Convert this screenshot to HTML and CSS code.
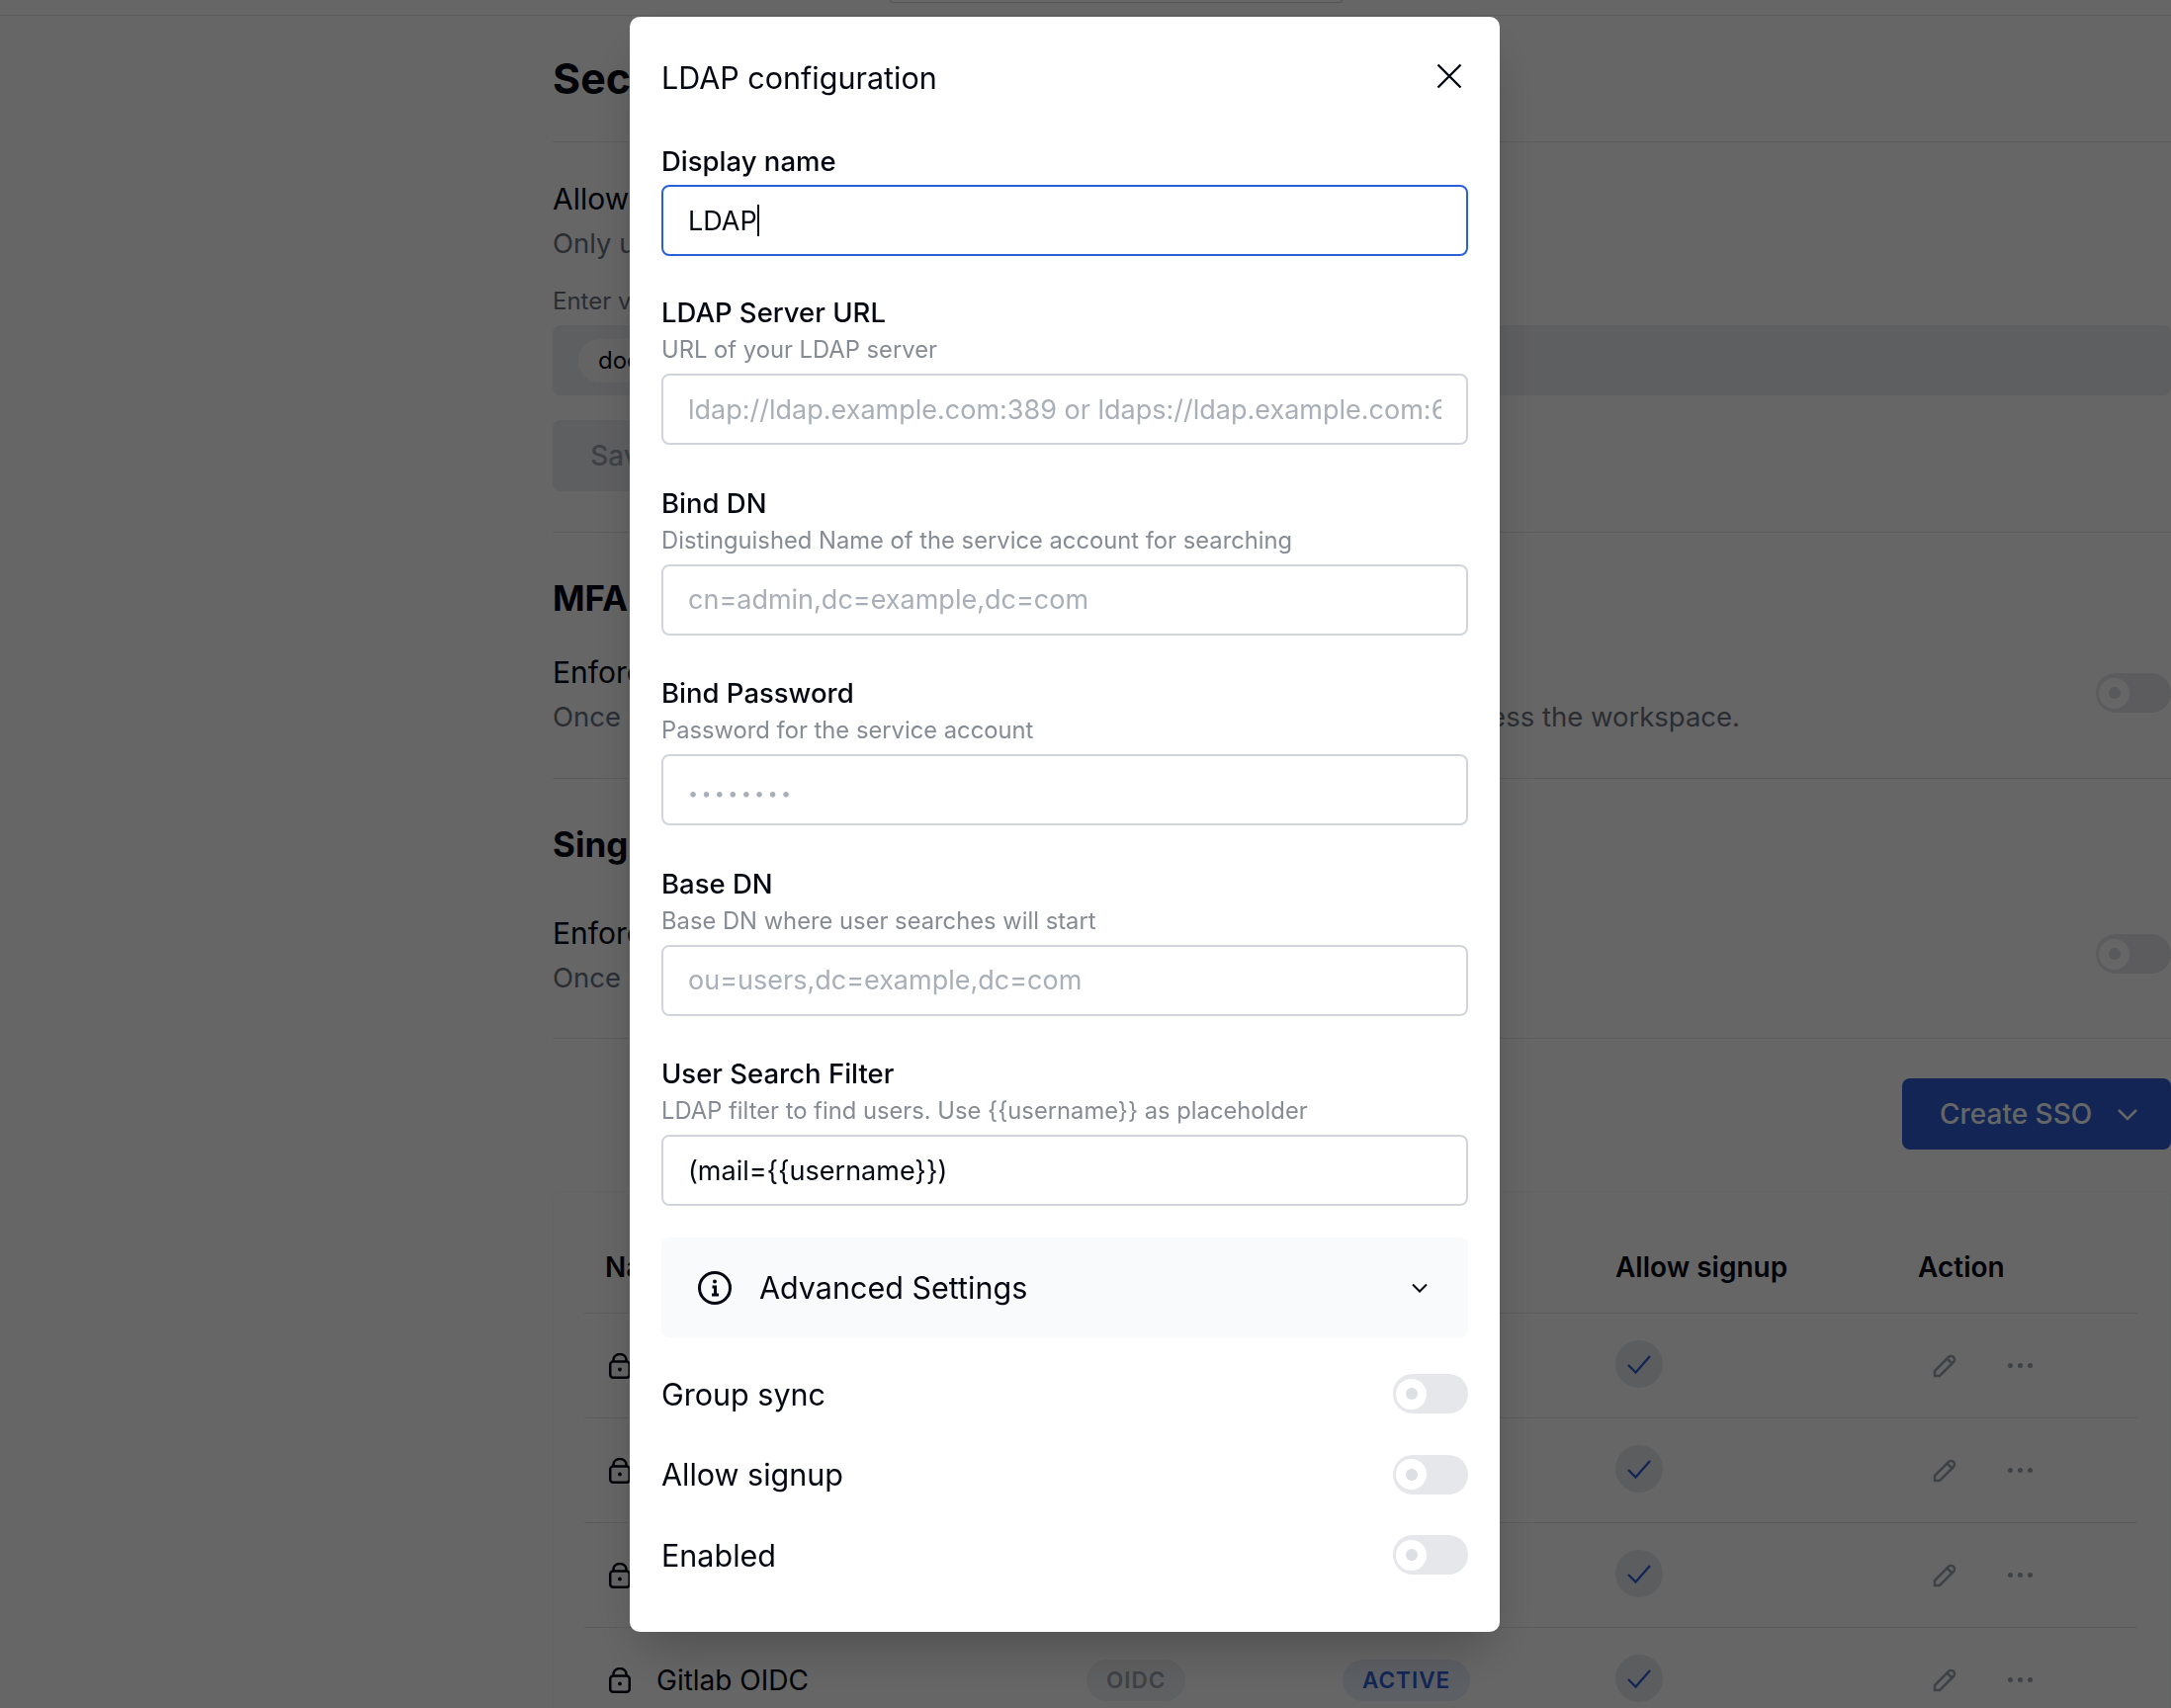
FILE: index.html
```html
<!DOCTYPE html>
<html lang="en">
<head>
    <meta charset="UTF-8">
    <title>LDAP configuration</title>
    <link rel="stylesheet" href="styles.css">
</head>
<body>
    <div class="topbar"><div class="searchbox"></div></div>

    <main class="page">
        <section class="head-section">
            <h1>Security</h1>
        </section>

        <section class="domains">
            <div class="row-title">Allowed email domains</div>
            <div class="row-desc">Only users with these email domains can join the workspace.</div>
            <div class="domain-label">Enter valid email domains</div>
            <div class="domain-box"><span class="domain-pill">docs.example.com</span></div>
            <button class="save-btn">Save</button>
        </section>

        <section class="setting mfa">
            <h2>MFA</h2>
            <div class="setting-row">
                <div>
                    <div class="row-title">Enforce MFA for all users</div>
                    <div class="row-desc">Once enabled, all users will be required to setup MFA before you can access the workspace.</div>
                </div>
                <span class="toggle"><span class="knob"></span></span>
            </div>
        </section>

        <section class="setting sso">
            <h2>Single sign-on</h2>
            <div class="setting-row">
                <div>
                    <div class="row-title">Enforce SSO for all users</div>
                    <div class="row-desc">Once enabled, all users will only be able to sign in with the SSO login.</div>
                </div>
                <span class="toggle"><span class="knob"></span></span>
            </div>
        </section>

        <div class="sso-actions">
            <button class="create-btn">Create SSO
                <svg width="24" height="24" viewBox="0 0 24 24"><path d="M3 8l9 9 9-9"/></svg>
            </button>
        </div>

        <section class="sso-card">
            <div class="sso-row sso-header">
                <div class="name-head">Name</div>
                <div>Type</div>
                <div>Status</div>
                <div>Allow signup</div>
                <div>Action</div>
            </div>
            <div class="sso-row">
                <div class="name-cell"><svg class="lock" viewBox="0 0 22 26"><path d="M4.500 9V6.500a6.500 5.500 0 0 1 13 0V9"/><rect x="1.250" y="8.500" width="19.500" height="16.250" rx="3"/><circle class="dot" cx="11" cy="16.500" r="1.900"/></svg></div>
                <div></div>
                <div></div>
                <div><span class="check"><svg width="26" height="26" viewBox="0 0 26 26"><path d="M2 14l7.500 7.500L24 5"/></svg></span></div>
                <div class="actions"><svg class="pencil" viewBox="0 0 24 24"><path d="M2 22v-5L16 3a3.500 3.500 0 0 1 5 5L7 22zM14.500 4.500l5 5"/></svg><span class="more"><i></i><i></i><i></i></span></div>
            </div>
            <div class="sso-row">
                <div class="name-cell"><svg class="lock" viewBox="0 0 22 26"><path d="M4.500 9V6.500a6.500 5.500 0 0 1 13 0V9"/><rect x="1.250" y="8.500" width="19.500" height="16.250" rx="3"/><circle class="dot" cx="11" cy="16.500" r="1.900"/></svg></div>
                <div></div>
                <div></div>
                <div><span class="check"><svg width="26" height="26" viewBox="0 0 26 26"><path d="M2 14l7.500 7.500L24 5"/></svg></span></div>
                <div class="actions"><svg class="pencil" viewBox="0 0 24 24"><path d="M2 22v-5L16 3a3.500 3.500 0 0 1 5 5L7 22zM14.500 4.500l5 5"/></svg><span class="more"><i></i><i></i><i></i></span></div>
            </div>
            <div class="sso-row">
                <div class="name-cell"><svg class="lock" viewBox="0 0 22 26"><path d="M4.500 9V6.500a6.500 5.500 0 0 1 13 0V9"/><rect x="1.250" y="8.500" width="19.500" height="16.250" rx="3"/><circle class="dot" cx="11" cy="16.500" r="1.900"/></svg></div>
                <div></div>
                <div></div>
                <div><span class="check"><svg width="26" height="26" viewBox="0 0 26 26"><path d="M2 14l7.500 7.500L24 5"/></svg></span></div>
                <div class="actions"><svg class="pencil" viewBox="0 0 24 24"><path d="M2 22v-5L16 3a3.500 3.500 0 0 1 5 5L7 22zM14.500 4.500l5 5"/></svg><span class="more"><i></i><i></i><i></i></span></div>
            </div>
            <div class="sso-row">
                <div class="name-cell"><svg class="lock" viewBox="0 0 22 26"><path d="M4.500 9V6.500a6.500 5.500 0 0 1 13 0V9"/><rect x="1.250" y="8.500" width="19.500" height="16.250" rx="3"/><circle class="dot" cx="11" cy="16.500" r="1.900"/></svg>Gitlab OIDC</div>
                <div><span class="badge">OIDC</span></div>
                <div><span class="badge badge-active">ACTIVE</span></div>
                <div><span class="check"><svg width="26" height="26" viewBox="0 0 26 26"><path d="M2 14l7.500 7.500L24 5"/></svg></span></div>
                <div class="actions"><svg class="pencil" viewBox="0 0 24 24"><path d="M2 22v-5L16 3a3.500 3.500 0 0 1 5 5L7 22zM14.500 4.500l5 5"/></svg><span class="more"><i></i><i></i><i></i></span></div>
            </div>
        </section>
    </main>

    <div class="overlay">
        <div class="modal">
            <div class="modal-head">
                <span class="modal-title">LDAP configuration</span>
                <svg class="close" viewBox="0 0 26 26"><path d="M1.500 1.500l23 23M24.500 1.500l-23 23"/></svg>
            </div>

            <div class="field field-first">
                <label class="label label-tight">Display name</label>
                <div class="input input-focus"><span>LDAP</span><span class="caret"></span></div>
            </div>
            <div class="field">
                <label class="label">LDAP Server URL</label>
                <div class="desc">URL of your LDAP server</div>
                <input class="input" type="text" placeholder="ldap://ldap.example.com:389 or ldaps://ldap.example.com:636">
            </div>
            <div class="field">
                <label class="label">Bind DN</label>
                <div class="desc">Distinguished Name of the service account for searching</div>
                <input class="input" type="text" placeholder="cn=admin,dc=example,dc=com">
            </div>
            <div class="field">
                <label class="label">Bind Password</label>
                <div class="desc">Password for the service account</div>
                <input class="input input-secret" type="password" placeholder="••••••••">
            </div>
            <div class="field">
                <label class="label">Base DN</label>
                <div class="desc">Base DN where user searches will start</div>
                <input class="input" type="text" placeholder="ou=users,dc=example,dc=com">
            </div>
            <div class="field">
                <label class="label">User Search Filter</label>
                <div class="desc">LDAP filter to find users. Use {{username}} as placeholder</div>
                <input class="input" type="text" value="(mail={{username}})">
            </div>

            <div class="advanced">
                <svg class="info" viewBox="0 0 36 36"><circle cx="18" cy="18" r="15.500"/><path d="M15.500 17H18.500V25M15 25H22"/><circle class="dot" cx="18" cy="11.500" r="2"/></svg>
                <span class="advanced-text">Advanced Settings</span>
                <svg class="chevron" viewBox="0 0 18 12"><path d="M2 2.500l7 7 7-7"/></svg>
            </div>

            <div class="switches">
                <div class="switch-row"><span>Group sync</span><span class="toggle"><span class="knob"></span></span></div>
                <div class="switch-row"><span>Allow signup</span><span class="toggle"><span class="knob"></span></span></div>
                <div class="switch-row"><span>Enabled</span><span class="toggle"><span class="knob"></span></span></div>
            </div>
        </div>
    </div>
</body>
</html>
```

FILE: styles.css
```css
* {
    box-sizing: border-box;
}
html, body {
    height: 1728px;
    overflow: hidden;
}
body {
    margin: 0;
    background-color: #fff;
    color: #030712;
    font-family: Inter, "Liberation Sans", sans-serif;
}
svg {
    fill: none;
    stroke: currentColor;
    flex-shrink: 0;
}
svg .dot {
    fill: currentColor;
    stroke: none;
}

/* page behind the dialog */
.topbar {
    height: 16px;
    padding-left: 900px;
    border-bottom: 1px solid #e5e7eb;
}
.searchbox {
    width: 458px;
    height: 3px;
    border: 1px solid #d1d5db;
    border-top: 0;
    border-radius: 0 0 8px 8px;
}
.page {
    padding-left: 559px;
    white-space: nowrap;
}
h1 {
    margin: 0;
    font-size: 43px;
    line-height: 46px;
    font-weight: 700;
}
h2 {
    margin: 0;
    font-size: 35px;
    line-height: 44px;
    font-weight: 700;
}
.head-section {
    padding: 40px 0 41px;
    border-bottom: 1px solid #e5e7eb;
}
.row-title {
    font-size: 30px;
    line-height: 36px;
}
.row-desc {
    font-size: 27.500px;
    line-height: 36px;
    color: #6b7280;
    margin-top: 9px;
}
.domains {
    padding: 39px 0 41px;
    border-bottom: 1px solid #e5e7eb;
}
.domain-label {
    margin-top: 26px;
    font-size: 24px;
    line-height: 30px;
    color: #6b7280;
}
.domain-box {
    display: flex;
    align-items: center;
    height: 71px;
    margin-top: 9px;
    padding-left: 26px;
    border-radius: 8px;
    background-color: #eceef1;
}
.domain-pill {
    height: 44px;
    padding: 0 20px;
    border-radius: 22px;
    background-color: #fafafa;
    font-size: 24px;
    line-height: 44px;
}
.save-btn {
    display: block;
    width: 142px;
    height: 72px;
    margin-top: 25px;
    border: 0;
    border-radius: 8px;
    background-color: #eceef1;
    color: #9ca3af;
    font: 500 28px Inter, sans-serif;
}
.setting {
    padding-top: 44px;
    border-bottom: 1px solid #e5e7eb;
}
.mfa {
    padding-bottom: 44px;
}
.sso {
    padding-bottom: 43px;
}
.setting-row {
    display: flex;
    justify-content: space-between;
    align-items: flex-start;
}
.mfa .setting-row {
    margin-top: 35px;
}
.sso .setting-row {
    margin-top: 50px;
}
.setting .toggle {
    margin-top: 19px;
}
.sso-actions {
    display: flex;
    justify-content: flex-end;
    padding-top: 40px;
}
.create-btn {
    display: flex;
    align-items: center;
    justify-content: space-between;
    width: 272px;
    height: 72px;
    padding: 0 32px 0 38px;
    border: 0;
    border-radius: 8px;
    background-color: #305dd2;
    color: #fff;
    font: 500 28px Inter, sans-serif;
}
.create-btn path {
    stroke-width: 2.500;
}
.sso-card {
    margin-top: 42px;
    padding: 0 33px 0 31px;
    border: 1px solid #f6f7f8;
    border-radius: 8px;
}
.sso-row {
    display: grid;
    grid-template-columns: 508px 259px 276px 306px 224px;
    align-items: center;
    height: 106px;
    border-top: 1px solid #e5e7eb;
    font-size: 28px;
}
.sso-header {
    height: 122px;
    padding-top: 30px;
    border-top: 0;
    font-weight: 600;
}
.name-head {
    padding-left: 21px;
}
.name-cell {
    display: flex;
    align-items: center;
    gap: 26px;
    padding-left: 25px;
}
.lock {
    width: 22px;
    height: 26px;
    stroke-width: 2.500;
}
.badge {
    display: inline-block;
    height: 42px;
    padding: 0 20px;
    border-radius: 21px;
    background-color: #eef0f2;
    color: #9ca3af;
    font-size: 22.500px;
    font-weight: 600;
    line-height: 42px;
    letter-spacing: 1px;
}
.badge-active {
    background-color: #e6edf9;
    color: #305dd2;
}
.check {
    display: flex;
    align-items: center;
    justify-content: center;
    width: 48px;
    height: 48px;
    margin-bottom: 4px;
    border-radius: 50%;
    background-color: #e3e8ee;
    color: #305dd2;
}
.check path {
    stroke-width: 2.400;
}
.actions {
    display: flex;
    align-items: center;
    gap: 52px;
    padding-left: 15px;
    color: #9ca3af;
}
.pencil {
    width: 24px;
    height: 24px;
    stroke-width: 2.500;
}
.more {
    display: flex;
    gap: 5px;
}
.more i {
    width: 5px;
    height: 5px;
    border-radius: 50%;
    background-color: #9ca3af;
}

/* dialog */
.overlay {
    position: fixed;
    top: 0;
    left: 0;
    right: 0;
    bottom: 0;
    padding: 17px 0 0 637px;
    background-color: rgba(0, 0, 0, .6);
}
.modal {
    width: 880px;
    height: 1634px;
    padding: 41px 32px 0;
    border-radius: 10px;
    background-color: #fff;
    box-shadow: 0 25px 50px -12px rgba(0, 0, 0, .25);
}
.modal-head {
    display: flex;
    justify-content: space-between;
    align-items: center;
    height: 40px;
    margin-bottom: 46px;
}
.modal-title {
    font-size: 30.500px;
}
.close {
    width: 26px;
    height: 26px;
    margin: -3px 6px 0 0;
    stroke-width: 2.400;
}
.field {
    margin-bottom: 40.500px;
}
.field-first {
    margin-bottom: 39px;
}
.label {
    display: block;
    font-size: 27.500px;
    line-height: 37px;
    font-weight: 500;
}
.label-tight {
    line-height: 38px;
    margin-bottom: 5px;
}
.desc {
    margin: 1px 0 6px;
    font-size: 23.750px;
    line-height: 36px;
    color: #858b94;
}
.input {
    display: block;
    width: 100%;
    height: 72px;
    padding: 0 25px;
    border: 2px solid #d1d5db;
    border-radius: 8px;
    outline: 0;
    background-color: #fff;
    color: #030712;
    font: 400 27px Inter, sans-serif;
}
.input::placeholder {
    color: #a9afb8;
}
.input-secret::placeholder {
    font-size: 18px;
    letter-spacing: 3.300px;
}
.input-focus {
    display: flex;
    align-items: center;
    border-color: #2b5fd9;
}
.caret {
    width: 2px;
    height: 32px;
    background-color: #030712;
}
.advanced {
    display: flex;
    align-items: center;
    height: 101px;
    margin-top: -8.500px;
    padding: 0 40px 0 36px;
    border-radius: 8px;
    background-color: #f9fafb;
}
.info {
    width: 36px;
    height: 36px;
    margin-right: 27px;
    stroke-width: 3;
}
.advanced-text {
    flex: 1;
    font-size: 30.500px;
}
.chevron {
    width: 18px;
    height: 12px;
    stroke-width: 2;
}
.switches {
    display: flex;
    flex-direction: column;
    gap: 41.500px;
    margin-top: 37px;
}
.switch-row {
    display: flex;
    justify-content: space-between;
    align-items: center;
    height: 40px;
    font-size: 30.500px;
}
.toggle {
    display: flex;
    align-items: center;
    width: 76px;
    height: 40px;
    padding-left: 3px;
    border-radius: 20px;
    background-color: #e5e7eb;
}
.knob {
    display: flex;
    align-items: center;
    justify-content: center;
    width: 31px;
    height: 31px;
    border-radius: 50%;
    background-color: #fff;
}
.knob::after {
    content: "";
    width: 12px;
    height: 12px;
    border-radius: 50%;
    background-color: #dcdfe4;
}
```
